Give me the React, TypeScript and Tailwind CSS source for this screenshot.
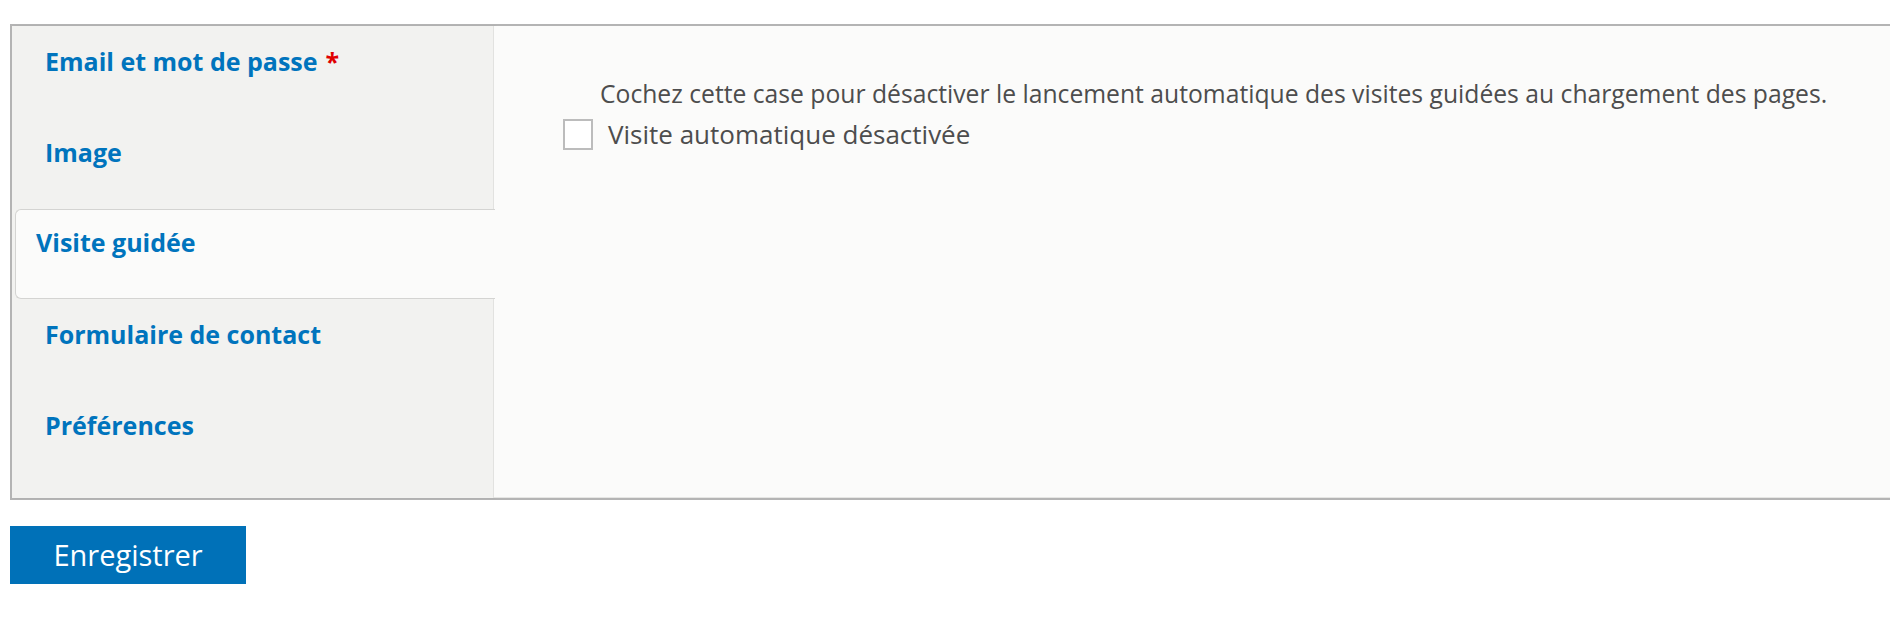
import { useState } from 'react';

const TABS = [
  { id: 'account', label: 'Email et mot de passe', required: true },
  { id: 'picture', label: 'Image' },
  { id: 'tour', label: 'Visite guidée' },
  { id: 'contact', label: 'Formulaire de contact' },
  { id: 'prefs', label: 'Préférences' },
];

export default function App() {
  const [active, setActive] = useState('tour');
  const [disabled, setDisabled] = useState(false);

  return (
    <div className="min-h-screen bg-white pt-[24px] pl-[10px]" style={{ fontFamily: '"Open Sans", "Liberation Sans", sans-serif' }}>
      <div className="flex h-[476px] border-2 border-r-0 border-[#b4b4b4]">
        {/* Tab list */}
        <ul className="w-[482px] shrink-0 bg-[#f2f2f0] border-r border-[#e2e2e0] shadow-[2px_0_2px_rgba(0,0,0,0.05)]">
          {TABS.map((tab) =>
            tab.id === active ? (
              <li key={tab.id} className="relative z-10 mt-[1px] ml-[3px] mr-[-2px] h-[90px] rounded-l-[6px] border border-r-0 border-[#d4d4d2] bg-[#fbfbfa] pl-[20px] pt-[14px]">
                <button onClick={() => setActive(tab.id)} className="text-[25px] font-bold text-[#0074bd]">
                  {tab.label}
                </button>
              </li>
            ) : (
              <li key={tab.id} className="h-[91px] pl-[33px] pt-[17px]">
                <button onClick={() => setActive(tab.id)} className="text-[25px] font-bold text-[#0074bd]">
                  {tab.label}
                  {tab.required && <span className="ml-[8px] text-[#e00000]">*</span>}
                </button>
              </li>
            )
          )}
        </ul>

        {/* Pane */}
        <div className="flex-1 bg-[#fbfbfa] border-b border-[#e6e6e4] pl-[69px] pt-[52px]">
          <p className="pl-[37px] text-[24.7px] leading-[32px] text-[#4d4d4d]">
            Cochez cette case pour désactiver le lancement automatique des visites guidées au chargement des pages.
          </p>
          <label className="mt-[6px] flex items-center gap-[15px] text-[26px] leading-[36px] text-[#4d4d4d]">
            <input
              type="checkbox"
              checked={disabled}
              onChange={(e) => setDisabled(e.target.checked)}
              className="h-[31px] w-[30px] appearance-none border-2 border-[#bcbcbc] bg-white"
            />
            Visite automatique désactivée
          </label>
        </div>
      </div>

      <button className="mt-[26px] h-[58px] w-[236px] bg-[#0071b8] text-[29px] text-white">
        Enregistrer
      </button>
    </div>
  );
}
